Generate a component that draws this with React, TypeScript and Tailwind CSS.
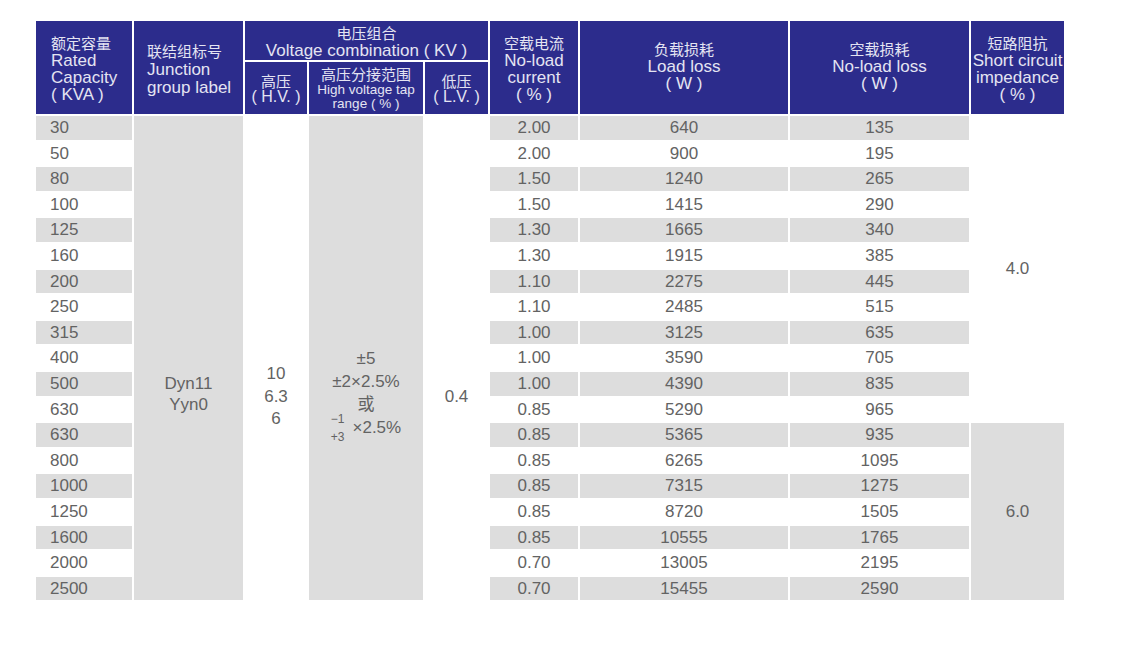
const rows: [string, string, string, string][] = [
  ['30', '2.00', '640', '135'],
  ['50', '2.00', '900', '195'],
  ['80', '1.50', '1240', '265'],
  ['100', '1.50', '1415', '290'],
  ['125', '1.30', '1665', '340'],
  ['160', '1.30', '1915', '385'],
  ['200', '1.10', '2275', '445'],
  ['250', '1.10', '2485', '515'],
  ['315', '1.00', '3125', '635'],
  ['400', '1.00', '3590', '705'],
  ['500', '1.00', '4390', '835'],
  ['630', '0.85', '5290', '965'],
  ['630', '0.85', '5365', '935'],
  ['800', '0.85', '6265', '1095'],
  ['1000', '0.85', '7315', '1275'],
  ['1250', '0.85', '8720', '1505'],
  ['1600', '0.85', '10555', '1765'],
  ['2000', '0.70', '13005', '2195'],
  ['2500', '0.70', '15455', '2590'],
];

const head = 'bg-[#2c2c8c] text-[#e4e4f2] flex flex-col justify-center';
const cjk = 'text-[15px] leading-[17px]';
const en = 'text-[17px] leading-[17px]';

function CenterHead({ lines }: { lines: string[] }) {
  return (
    <div className={`${head} items-center text-center row-span-2 whitespace-nowrap pt-[2px]`}>
      <div className={cjk}>{lines[0]}</div>
      {lines.slice(1).map((l, i) => (
        <div key={i} className={en}>
          {l}
        </div>
      ))}
    </div>
  );
}

export default function App() {
  return (
    <div className="min-h-screen bg-white pl-[36px] pt-[21px] font-['Liberation_Sans','Noto_Sans_CJK_SC',sans-serif]">
      <div className="grid w-max grid-cols-[96px_109px_62px_114px_63px_88px_208px_179px_93px] grid-rows-[39px_52px_repeat(19,23.6px)] gap-[2px] text-[#636363]">
        {/* header */}
        <div className={`${head} row-span-2 pl-[15px] pt-[2px]`}>
          <div className={cjk}>额定容量</div>
          <div className={en}>Rated</div>
          <div className={en}>Capacity</div>
          <div className={en}>( KVA )</div>
        </div>
        <div className={`${head} row-span-2 pl-[13px] pt-[4px]`}>
          <div className="text-[15px] leading-[18px]">联结组标号</div>
          <div className={en}>Junction</div>
          <div className="text-[17px] leading-[19px]">group label</div>
        </div>
        <div className={`${head} col-span-3 items-center text-center pt-[3px]`}>
          <div className={cjk}>电压组合</div>
          <div className={en}>Voltage combination ( KV )</div>
        </div>
        <CenterHead lines={['空载电流', 'No-load', 'current', '( % )']} />
        <div className={`${head} row-span-2 items-center text-center pb-[2px]`}>
          <div className="text-[15px] leading-[17px]">负载损耗</div>
          <div className={en}>Load loss</div>
          <div className={en}>( W )</div>
        </div>
        <div className={`${head} row-span-2 items-center text-center pb-[2px]`}>
          <div className="text-[15px] leading-[17px]">空载损耗</div>
          <div className={en}>No-load loss</div>
          <div className={en}>( W )</div>
        </div>
        <CenterHead lines={['短路阻抗', 'Short circuit', 'impedance', '( % )']} />

        <div className={`${head} items-center text-center whitespace-nowrap pt-[3px]`}>
          <div className="text-[15px] leading-[15px]">高压</div>
          <div className="text-[16px] leading-[16px]">( H.V. )</div>
        </div>
        <div className={`${head} items-center text-center whitespace-nowrap`}>
          <div className="text-[15px] leading-[17px]">高压分接范围</div>
          <div className="text-[13.5px] leading-[14px]">High voltage tap</div>
          <div className="text-[13.5px] leading-[14px]">range ( % )</div>
        </div>
        <div className={`${head} items-center text-center whitespace-nowrap pt-[3px]`}>
          <div className="text-[15px] leading-[15px]">低压</div>
          <div className="text-[16px] leading-[16px]">( L.V. )</div>
        </div>

        {/* body */}
        {rows.map(([cap, cur, load, noload], i) => {
          const bg = i % 2 === 0 ? 'bg-[#dddddd]' : 'bg-white';
          const cell = `${bg} flex items-center justify-center text-[17px]`;
          return (
            <div key={i} className="contents">
              <div className={`${bg} flex items-center pl-[14px] text-[17px]`}>{cap}</div>
              {i === 0 && (
                <>
                  <div className="row-span-19 flex flex-col items-center justify-center bg-[#dddddd] pt-[72px] text-[17px] leading-[21px]">
                    <div>Dyn11</div>
                    <div>Yyn0</div>
                  </div>
                  <div className="row-span-19 flex flex-col items-center justify-center bg-white pt-[78px] text-[17px] leading-[22.5px]">
                    <div>10</div>
                    <div>6.3</div>
                    <div>6</div>
                  </div>
                  <div className="row-span-19 flex flex-col items-center justify-center bg-[#dddddd] pt-[70px] text-[17px] leading-[23px]">
                    <div>±5</div>
                    <div>±2×2.5%</div>
                    <div>或</div>
                    <div className="flex h-[23px] items-center">
                      <span className="mr-[8px] flex flex-col items-center text-[12px] leading-[18px]">
                        <span>−1</span>
                        <span>+3</span>
                      </span>
                      <span>×2.5%</span>
                    </div>
                  </div>
                  <div className="row-span-19 flex items-center justify-center bg-white pt-[78px] text-[17px]">
                    0.4
                  </div>
                </>
              )}
              <div className={cell}>{cur}</div>
              <div className={cell}>{load}</div>
              <div className={cell}>{noload}</div>
              {i === 0 && (
                <div className="row-span-12 flex items-center justify-center bg-white text-[17px]">4.0</div>
              )}
              {i === 12 && (
                <div className="row-span-7 flex items-center justify-center bg-[#dddddd] text-[17px]">6.0</div>
              )}
            </div>
          );
        })}
      </div>
    </div>
  );
}
